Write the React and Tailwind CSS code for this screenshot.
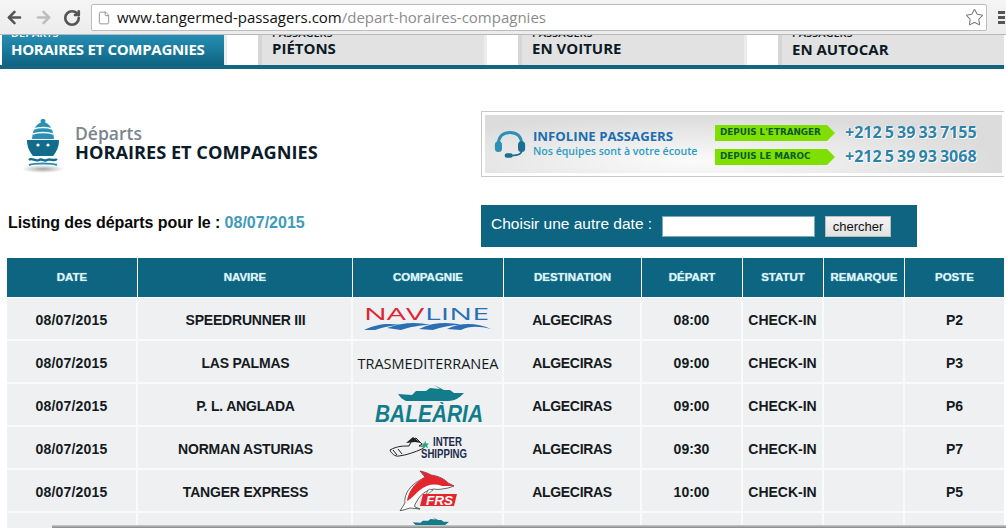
import React from 'react';
import { ArrowLeft, ArrowRight, RotateCw, File, Star } from 'lucide-react';

const tabs = [
    { small: 'DÉPARTS', main: 'HORAIRES ET COMPAGNIES', active: true, mainClass: 'pt-[1px] tracking-[-0.3px]', pad: 'pl-[9px]' },
    { small: 'PASSAGERS', main: 'PIÉTONS', active: false, mainClass: 'pt-0', pad: 'pl-[10px]' },
    { small: 'PASSAGERS', main: 'EN VOITURE', active: false, mainClass: 'pt-0', pad: 'pl-[10px]' },
    { small: 'PASSAGERS', main: 'EN AUTOCAR', active: false, mainClass: 'pt-[1px]', pad: 'pl-[10px]' },
];

const columns = [
    { label: 'DATE', width: 'w-[131px]' },
    { label: 'NAVIRE', width: 'w-[215px]' },
    { label: 'COMPAGNIE', width: 'w-[151px]' },
    { label: 'DESTINATION', width: 'w-[138px]' },
    { label: 'DÉPART', width: 'w-[101px]' },
    { label: 'STATUT', width: 'w-[81px]' },
    { label: 'REMARQUE', width: 'w-[81px]' },
    { label: 'POSTE', width: 'w-[99px]' },
];

const NavlineLogo = () => (
    <svg width="130" height="25" viewBox="0 0 130 25" className="mx-auto mt-[1px] block">
        <text x="1" y="13" fontFamily="Open Sans" fontWeight="400" fontSize="16" fill="#e0242f" textLength="60" lengthAdjust="spacingAndGlyphs">NAV</text>
        <text x="62" y="13" fontFamily="Open Sans" fontWeight="400" fontSize="16" fill="#2a6fb5" textLength="64" lengthAdjust="spacingAndGlyphs">LINE</text>
        <path d="M1 23C14 17 24 16 38 18C30 18 20 20 12 23Z" fill="#2a6fb5" />
        <path d="M24 21C40 15 54 15 68 18C58 18 46 20 38 23Z" fill="#2a6fb5" />
        <path d="M56 22C70 15 86 15 98 18C88 18 78 20 70 23Z" fill="#2a6fb5" />
        <path d="M84 22C98 15 114 16 128 22C116 19 106 19 98 23Z" fill="#2a6fb5" />
    </svg>
);

const BaleariaShip = ({ className, width = 66, height = 17 }) => (
    <svg width={width} height={height} viewBox="0 0 66 17" className={className}>
        <path d="M0 9L14 10L18 6L28 6L32 3L42 4L36 0L46 5L52 5L56 8L66 8C62 12 58 16 50 16L8 16C4 14 2 12 0 9Z" fill="#137c8b" />
    </svg>
);

const BaleariaLogo = () => (
    <div className="flex flex-col items-center">
        <BaleariaShip className="ml-[6px] block" />
        <svg width="110" height="22" viewBox="0 0 110 22" className="ml-[2px] block">
            <text x="1" y="20" fontFamily="Liberation Sans" fontWeight="700" fontStyle="italic" fontSize="23" fill="#137c8b" textLength="108" lengthAdjust="spacingAndGlyphs">BALEÀRIA</text>
        </svg>
    </div>
);

const InterShippingLogo = () => (
    <svg width="80" height="26" viewBox="0 0 80 26" className="mx-auto ml-[36px] block">
        <path d="M1 15C8 11 14 11 20 11L23 5L27 3L33 9L30 11C34 11 38 11 33 14C26 17 18 20 10 21C6 22 2 18 1 15Z" fill="none" stroke="#222" strokeWidth="1" />
        <path d="M17 8L24 2L32 8L26 7Z" fill="#222" />
        <path d="M4 15L8 20M9 14L13 19" stroke="#222" strokeWidth="1" />
        <path d="M36 6L37 9L40 9L38 11L39 14L36 12L33 14L34 11L32 9L35 9Z" transform="translate(2 0) scale(0.95)" fill="#1fa87a" />
        <text x="44" y="11" fontFamily="Liberation Sans" fontWeight="700" fontSize="12" fill="#1d2a4c" textLength="29" lengthAdjust="spacingAndGlyphs">INTER</text>
        <text x="32" y="23" fontFamily="Liberation Sans" fontWeight="700" fontSize="12" fill="#1d2a4c" textLength="46" lengthAdjust="spacingAndGlyphs">SHIPPING</text>
    </svg>
);

const FrsLogo = () => (
    <svg width="60" height="41" viewBox="0 0 60 41" className="mx-auto block">
        <path d="M22 1C26 2 30 3 33 5C41 6 48 10 50 13L56 16L50 18C44 19 40 20 36 19C28 20 22 25 19 31C17 34 16 36 17 37L22 39L12 38L2 41L7 33C6 26 10 16 24 9L27 7Z" fill="#fff" stroke="#222" strokeWidth="0.7" />
        <path d="M22 1C26 2 30 3 33 5C41 6 48 10 50 13L56 16L44 16C36 13 28 15 22 20C16 25 12 30 9 31C10 24 14 15 24 9L27 7Z" fill="#e3262e" />
        <path d="M31 19L27 26L35 20Z" fill="#fff" stroke="#222" strokeWidth="0.5" />
        <path d="M25 24L59 24L56 36L22 36Z" fill="#e3262e" />
        <text x="28" y="34.5" fontFamily="Liberation Sans" fontWeight="700" fontStyle="italic" fontSize="13" fill="#fff" textLength="27" lengthAdjust="spacingAndGlyphs">FRS</text>
    </svg>
);

const rows = [
    { date: '08/07/2015', ship: 'SPEEDRUNNER III', logo: <NavlineLogo />, dest: 'ALGECIRAS', time: '08:00', status: 'CHECK-IN', post: 'P2' },
    { date: '08/07/2015', ship: 'LAS PALMAS', logo: <span className="block pt-[4px] pl-[1px] font-['Open_Sans',sans-serif] text-[14.5px] font-normal whitespace-nowrap">TRASMEDITERRANEA</span>, dest: 'ALGECIRAS', time: '09:00', status: 'CHECK-IN', post: 'P3' },
    { date: '08/07/2015', ship: 'P. L. ANGLADA', logo: <BaleariaLogo />, dest: 'ALGECIRAS', time: '09:00', status: 'CHECK-IN', post: 'P6' },
    { date: '08/07/2015', ship: 'NORMAN ASTURIAS', logo: <InterShippingLogo />, dest: 'ALGECIRAS', time: '09:30', status: 'CHECK-IN', post: 'P7' },
    { date: '08/07/2015', ship: 'TANGER EXPRESS', logo: <FrsLogo />, dest: 'ALGECIRAS', time: '10:00', status: 'CHECK-IN', post: 'P5' },
];

const ShipIcon = () => (
    <svg width="42" height="56" viewBox="0 0 42 56" className="block">
        <defs>
            <radialGradient id="shadow">
                <stop offset="0%" stopColor="#a5a5a5" />
                <stop offset="100%" stopColor="#fff" />
            </radialGradient>
        </defs>
        <ellipse cx="21" cy="50" rx="21" ry="4" fill="url(#shadow)" />
        <rect x="18.5" y="0" width="5" height="4" rx="2" fill="#2a8fb5" />
        <path d="M21 3C14 4 11 10 10 20L32 20C31 10 28 4 21 3Z" fill="#2a8fb5" />
        <path d="M12 10C16 8 26 8 30 10M11 15C16 13 26 13 31 15" fill="none" stroke="#fff" strokeWidth="1.4" />
        <path d="M5 21L37 21C37 29 34 33 31 37L11 37C8 33 5 29 5 21Z" fill="#146c8c" />
        <circle cx="16" cy="26" r="1.6" fill="#fff" />
        <circle cx="26" cy="26" r="1.6" fill="#fff" />
        <path d="M7 41C10 38 13 43 17 41C20 39 22 43 25 41C29 39 32 43 35 40" fill="none" stroke="#146c8c" strokeWidth="2.4" />
        <path d="M7 46C12 44 30 44 35 46" fill="none" stroke="#2a8fb5" strokeWidth="2" />
    </svg>
);

const HeadsetIcon = () => (
    <svg width="32" height="30" viewBox="0 0 36 32" className="block">
        <path d="M5 16C5 7 11 3 18 3C25 3 31 7 31 16" fill="none" stroke="#2c8fb4" strokeWidth="3.5" />
        <rect x="1" y="13" width="8" height="12" rx="4" fill="#2c8fb4" />
        <rect x="27" y="13" width="8" height="12" rx="4" fill="#1a6f91" />
        <path d="M31 24C31 28 26 29 20 29" fill="none" stroke="#1a6f91" strokeWidth="2" />
        <rect x="12" y="26.5" width="9" height="5" rx="2.5" fill="#1a6f91" />
    </svg>
);

const PhoneLine = ({ label, phone, last }) => (
    <div className={`flex h-[16px] items-center ${last ? '' : 'mb-[8px]'}`}>
        <div className="flex">
            <div className="flex h-[16px] w-[112px] items-center bg-[#7fe000] pl-[5px] font-['DejaVu_Sans',sans-serif] text-[8.8px] font-bold whitespace-nowrap text-[#0d5a2e]">
                {label}
            </div>
            <div className="h-0 w-0 border-y-[8px] border-l-[8px] border-y-transparent border-l-[#7fe000]" />
        </div>
        <div className="ml-[10px] -translate-y-[1px] font-['Open_Sans',sans-serif] text-[16px] leading-[16px] font-bold whitespace-nowrap text-[#2b83aa] [word-spacing:-1px] [text-shadow:1px_1px_0_#fff,-1px_0_1px_#fff]">
            {phone}
        </div>
    </div>
);

const cellClass = 'h-[43px] border-r-2 border-b-2 border-[#f9fafa] bg-[#eff0f2] p-0 pt-[4px]';
const lastRowCell = 'h-[43px] border-r-2 border-[#f9fafa] bg-[#eff0f2] p-0';

const App = () => {
    return (
        <div className="relative h-[528px] w-[1006px] overflow-hidden bg-white font-['Liberation_Sans',Arial,sans-serif]">
            {/* Browser toolbar */}
            <div className="flex h-[35px] items-center border-b border-[#b8b8b8] bg-gradient-to-b from-[#f5f5f5] to-[#ececec] pt-[1px]">
                <ArrowLeft className="ml-[5px] h-[19px] w-[19px] text-[#555]" strokeWidth={3.2} />
                <ArrowRight className="ml-[10px] h-[19px] w-[19px] text-[#bdbdbd]" strokeWidth={3.2} />
                <RotateCw className="ml-[10px] h-[18px] w-[18px] text-[#555]" strokeWidth={3.6} />
                <div className="ml-[10px] flex h-[27px] w-[896px] items-center rounded-[2px] border border-[#bdbdbd] bg-white">
                    <File className="ml-[5px] h-[16px] w-[14px] text-[#8a8a8a]" strokeWidth={1.5} />
                    <div className="ml-[6px] font-['Open_Sans',sans-serif] text-[15px] whitespace-nowrap text-[#111]">
                        www.tangermed-passagers.com<span className="text-[#8c8c8c]">/depart-horaires-compagnies</span>
                    </div>
                    <Star className="mr-[2px] ml-auto h-[19px] w-[19px] text-[#777]" strokeWidth={1.3} />
                </div>
                <div className="ml-[11px] flex flex-col gap-[2px]">
                    <div className="h-[3px] w-[7px] bg-[#555]" />
                    <div className="h-[3px] w-[7px] bg-[#555]" />
                    <div className="h-[3px] w-[7px] bg-[#555]" />
                </div>
            </div>

            {/* Main navigation */}
            <div className="ml-[2px] flex h-[30px] w-[1002px] overflow-hidden">
                {tabs.map((tab, i) => (
                    <React.Fragment key={tab.main}>
                        <div className={`h-[30px] w-[222px] shrink-0 overflow-hidden font-['Open_Sans',sans-serif] ${tab.pad} ${tab.active ? 'bg-gradient-to-b from-[#258fb4] to-[#0f6482] text-white' : 'bg-[#e2e2e2] text-[#0c1a26]'}`}>
                            <div className="-mt-[8px] text-[11px] leading-[11px] font-semibold">{tab.small}</div>
                            <div className={`text-[15px] leading-[20px] font-bold whitespace-nowrap ${tab.mainClass}`}>{tab.main}</div>
                        </div>
                        {i < tabs.length - 1 && (
                            <div className="w-[38px] shrink-0 border-r-4 border-l-3 border-r-[#d6d6d6] border-l-[#ececec] bg-white" />
                        )}
                    </React.Fragment>
                ))}
            </div>
            <div className="h-[4px] w-[1004px] bg-[#146582]" />

            {/* Title and infoline banner */}
            <div className="mt-[42px] flex items-start">
                <div className="mt-[8px] ml-[22px] flex w-[459px]">
                    <ShipIcon />
                    <div className="ml-[11px] pt-[4px] font-['Open_Sans',sans-serif]">
                        <div className="text-[17.5px] leading-[20px] font-semibold text-[#7b858b]">Départs</div>
                        <div className="text-[18.2px] leading-[18px] font-bold whitespace-nowrap text-[#0b1b29]">HORAIRES ET COMPAGNIES</div>
                    </div>
                </div>
                <div className="h-[66px] w-[523px] border border-r-0 border-[#c8c8c8] py-[3px] pr-[2px] pl-[3px]">
                    <div className="flex h-full items-center bg-[radial-gradient(ellipse_at_40%_80%,#fbfbfb_0%,#dcdcdc_70%)] pl-[9px]">
                        <HeadsetIcon />
                        <div className="ml-[7px] w-[182px] -translate-y-[1px] font-['Open_Sans',sans-serif]">
                            <div className="text-[13.2px] leading-[16px] font-bold text-[#1c6db0]">INFOLINE PASSAGERS</div>
                            <div className="text-[10.6px] leading-[14px] font-semibold whitespace-nowrap text-[#2a9cc6]">Nos équipes sont à votre écoute</div>
                        </div>
                        <div className="pt-[1px]">
                            <PhoneLine label="DEPUIS L'ETRANGER" phone="+212 5 39 33 7155" />
                            <PhoneLine label="DEPUIS LE MAROC" phone="+212 5 39 93 3068" last />
                        </div>
                    </div>
                </div>
            </div>

            {/* Date listing and search */}
            <div className="mt-[28px] flex h-[42px]">
                <div className="w-[481px] pt-[8px] pl-[8px] text-[16px] leading-[20px] font-bold whitespace-nowrap text-[#0a0a0a]">
                    <span className="tracking-[-0.07px]">Listing des départs pour le : </span><span className="text-[#3f9abb]">08/07/2015</span>
                </div>
                <div className="flex w-[436px] items-center bg-[#0d6582] pl-[10px]">
                    <span className="-translate-y-[2px] text-[15.5px] whitespace-nowrap text-white">Choisir une autre date :</span>
                    <input type="text" className="ml-[10px] h-[21px] w-[153px] border border-[#7fa9b8] bg-white" />
                    <button className="ml-[10px] h-[21px] w-[66px] border border-[#bbb] bg-gradient-to-b from-[#f4f4f4] to-[#e2e2e2] text-[13px] text-[#111]">chercher</button>
                </div>
            </div>

            {/* Departures table */}
            <table className="mt-[11px] ml-[7px] w-[997px] table-fixed border-separate border-spacing-0">
                <thead>
                    <tr>
                        {columns.map((col) => (
                            <th key={col.label} className={`${col.width} h-[40px] border-r border-b border-white bg-[#0d6582] p-0 text-center text-[11.5px] font-bold whitespace-nowrap text-[#dff3f6] [text-shadow:0_0_1px_#9fd8e0] last:border-r-0`}>
                                {col.label}
                            </th>
                        ))}
                    </tr>
                </thead>
                <tbody className="text-center text-[14px] font-bold text-[#141a20]">
                    {rows.map((row) => (
                        <tr key={row.ship}>
                            <td className={`${cellClass} tracking-[0.2px]`}>{row.date}</td>
                            <td className={`${cellClass} pl-[2px] tracking-[-0.2px]`}>{row.ship}</td>
                            <td className="h-[43px] border-r-2 border-b-2 border-[#f9fafa] bg-[#eff0f2] p-0">{row.logo}</td>
                            <td className={`${cellClass} tracking-[-0.3px]`}>{row.dest}</td>
                            <td className={cellClass}>{row.time}</td>
                            <td className={cellClass}>{row.status}</td>
                            <td className={cellClass} />
                            <td className="h-[43px] border-b-2 border-[#f9fafa] bg-[#eff0f2] p-0 pt-[4px]">{row.post}</td>
                        </tr>
                    ))}
                    <tr>
                        <td className={lastRowCell} />
                        <td className={lastRowCell} />
                        <td className={`${lastRowCell} align-top`}>
                            <BaleariaShip className="mx-auto mt-[4px] block translate-x-[3px]" width={36} height={10} />
                        </td>
                        <td className={lastRowCell} />
                        <td className={lastRowCell} />
                        <td className={lastRowCell} />
                        <td className={lastRowCell} />
                        <td className="h-[43px] bg-[#eff0f2] p-0" />
                    </tr>
                </tbody>
            </table>

            {/* Window edge along the bottom */}
            <div className="absolute right-0 bottom-0 left-[52px] h-[3px] bg-gradient-to-b from-[#cfcfcf] to-[#868686]" />
        </div>
    );
};

export default App;
